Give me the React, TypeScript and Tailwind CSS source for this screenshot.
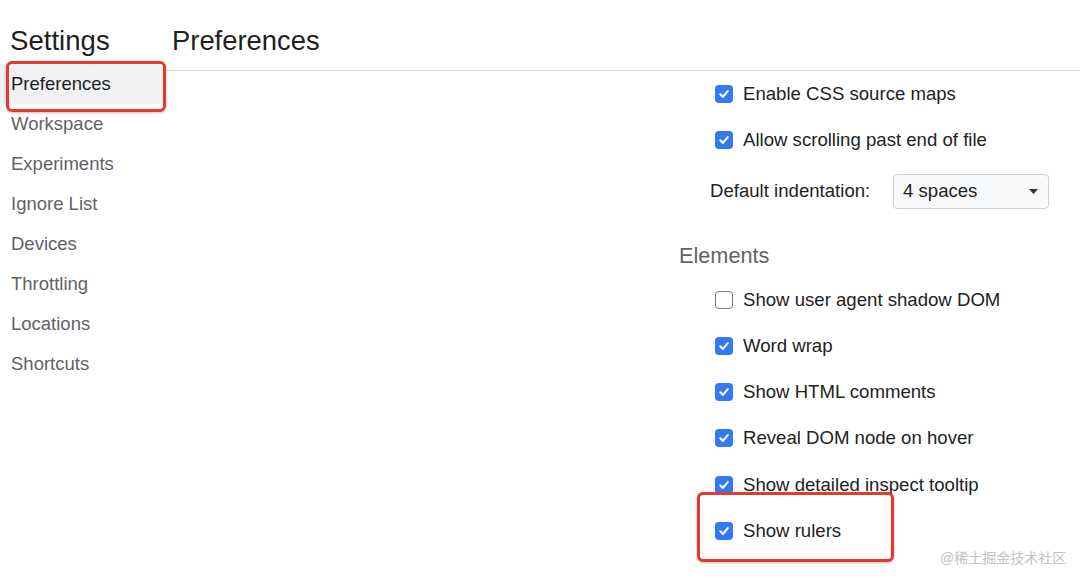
import React from "react";

const font = { fontFamily: '"Liberation Sans", Arial, sans-serif' };

function Check({ checked }: { checked: boolean }) {
  if (!checked) {
    return (
      <span className="block w-[18px] h-[18px] shrink-0 rounded-[4px] border border-[#7a7a7a] bg-white" />
    );
  }
  return (
    <span className="flex w-[18px] h-[18px] shrink-0 items-center justify-center rounded-[4px] bg-[#3478f6]">
      <svg width="12" height="12" viewBox="0 0 12 12">
        <path d="M2.3 6.3 L4.9 8.9 L9.8 3.1" fill="none" stroke="#ffffff" strokeWidth="2.1" strokeLinecap="round" strokeLinejoin="round" />
      </svg>
    </span>
  );
}

function Row({ label, checked, className = "" }: { label: string; checked: boolean; className?: string }) {
  return (
    <div className={"flex h-[46px] items-center gap-[10px] pl-[36px] " + className}>
      <Check checked={checked} />
      <span className="text-[18.6px] leading-[22px] text-[#222222] whitespace-nowrap">{label}</span>
    </div>
  );
}

const sideItems = ["Preferences", "Workspace", "Experiments", "Ignore List", "Devices", "Throttling", "Locations", "Shortcuts"];

export default function App() {
  return (
    <div className="relative w-[1080px] h-[581px] overflow-hidden bg-white" style={font}>
      <div className="flex h-full">
        <aside className="w-[165px] shrink-0">
          <div className="pt-[25px] pl-[10px] text-[27.6px] leading-[31px] text-[#1f1f1f]">Settings</div>
          <div className="mt-[8px] flex flex-col">
            {sideItems.map((s, i) => (
              <div
                key={s}
                className={
                  "h-[40px] flex items-center pl-[11px] text-[18.5px] whitespace-nowrap " +
                  (i === 0 ? "bg-[#f0f1f3] text-[#1f1f1f]" : "text-[#5f6368]")
                }
              >
                {s}
              </div>
            ))}
          </div>
        </aside>
        <main className="flex-1 flex flex-col">
          <div className="pt-[25px] pb-[14px] pl-[7px] text-[27.4px] leading-[31px] text-[#1f1f1f] border-b border-[#d3d3d3]">
            Preferences
          </div>
          <div className="ml-[514px] flex flex-col">
            <Row label="Enable CSS source maps" checked />
            <Row label="Allow scrolling past end of file" checked />
            <div className="flex h-[56px] items-center pl-[31px]">
              <span className="w-[183px] text-[18.6px] text-[#222222] whitespace-nowrap">Default indentation:</span>
              <div className="flex h-[35px] w-[156px] items-center justify-between rounded-[4px] border border-[#cfcfcf] bg-[#f8f9fa] pl-[9px] pr-[10px]">
                <span className="text-[18.6px] text-[#222222]">4 spaces</span>
                <svg width="9" height="5" viewBox="0 0 9 5">
                  <path d="M0 0 L9 0 L4.5 5 Z" fill="#333333" />
                </svg>
              </div>
            </div>
            <div className="pt-[26px] pb-[10px] text-[21.7px] leading-[22px] text-[#5f6368]">Elements</div>
            <Row label="Show user agent shadow DOM" checked={false} />
            <Row label="Word wrap" checked />
            <Row label="Show HTML comments" checked />
            <Row label="Reveal DOM node on hover" checked />
            <Row label="Show detailed inspect tooltip" checked className="h-[47px]" />
            <Row label="Show rulers" checked className="relative z-20" />
          </div>
        </main>
      </div>

      <div className="absolute left-[6px] top-[61px] w-[160px] h-[51px] rounded-[6px] border-[3px] border-[#e8372c] shadow-[0_1px_3px_rgba(0,0,0,0.25)]" />
      <div className="absolute left-[697px] top-[492px] w-[197px] h-[70px] z-10 rounded-[6px] border-[3px] border-[#e8372c] bg-white shadow-[0_1px_3px_rgba(0,0,0,0.25)]" />

      <div
        className="absolute left-[940px] top-[548px] text-[14px] leading-[20px] text-[#c2c2c2] whitespace-nowrap"
        style={{ fontFamily: '"Liberation Sans", "Noto Sans CJK SC", sans-serif' }}
      >
        @稀土掘金技术社区
      </div>
    </div>
  );
}
